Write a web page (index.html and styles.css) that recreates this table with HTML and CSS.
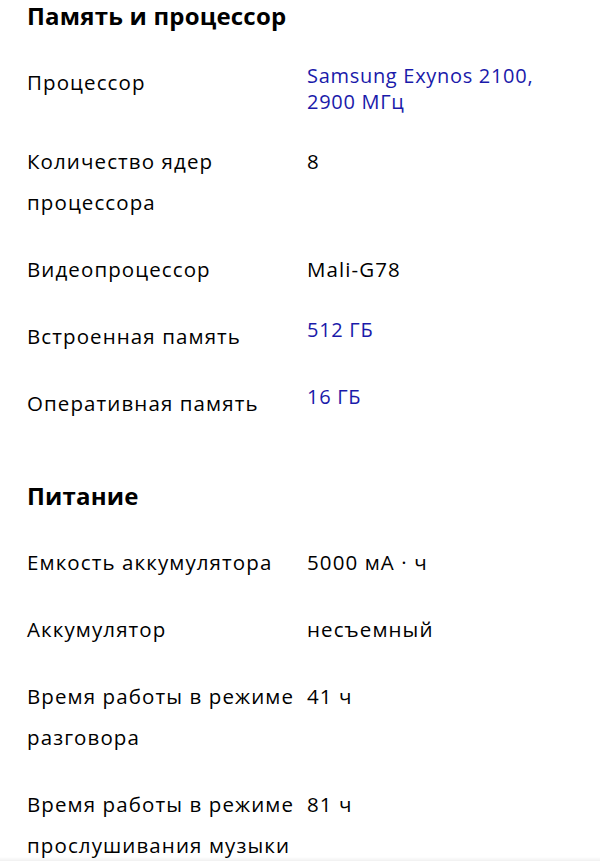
FILE: index.html
```html
<!DOCTYPE html>
<html lang="ru">
<head>
<meta charset="utf-8">
<link rel="stylesheet" href="styles.css">
</head>
<body>
<main class="page">
  <section class="group">
    <h2 class="group-title">Память и процессор</h2>
    <dl class="specs">
      <dt class="spec-name">Процессор</dt>
      <dd class="spec-value"><a class="spec-link" href="#">Samsung Exynos 2100, 2900&nbsp;МГц</a></dd>
      <dt class="spec-name">Количество ядер процессора</dt>
      <dd class="spec-value">8</dd>
      <dt class="spec-name">Видеопроцессор</dt>
      <dd class="spec-value">Mali-G78</dd>
      <dt class="spec-name">Встроенная память</dt>
      <dd class="spec-value"><a class="spec-link" href="#">512 ГБ</a></dd>
      <dt class="spec-name">Оперативная память</dt>
      <dd class="spec-value"><a class="spec-link" href="#">16 ГБ</a></dd>
    </dl>
  </section>
  <section class="group">
    <h2 class="group-title">Питание</h2>
    <dl class="specs">
      <dt class="spec-name">Емкость аккумулятора</dt>
      <dd class="spec-value">5000 мА · ч</dd>
      <dt class="spec-name">Аккумулятор</dt>
      <dd class="spec-value">несъемный</dd>
      <dt class="spec-name">Время работы в режиме разговора</dt>
      <dd class="spec-value">41 ч</dd>
      <dt class="spec-name">Время работы в режиме прослушивания музыки</dt>
      <dd class="spec-value">81 ч</dd>
    </dl>
  </section>
</main>
<div class="bottom-fade"></div>
</body>
</html>
```
FILE: styles.css
```css
html, body {
  margin: 0;
  padding: 0;
  background: #fff;
}
body {
  font-family: "Open Sans", "Noto Sans", sans-serif;
  color: #000;
}
.page {
  padding: 1px 20px 0 27px;
}
.group + .group {
  margin-top: 57px;
}
.group-title {
  margin: 0 0 31px;
  font-size: 24px;
  line-height: 30px;
  font-weight: 700;
  letter-spacing: 0.2px;
}
.specs {
  margin: 0;
  display: grid;
  grid-template-columns: 270px 1fr;
  column-gap: 10px;
  row-gap: 26px;
}
.spec-name,
.spec-value {
  margin: 0;
  font-size: 20.5px;
  line-height: 41px;
  letter-spacing: 1.1px;
}
.spec-link {
  display: block;
  padding-top: 1px;
  color: #1a1aaa;
  text-decoration: none;
  font-size: 20px;
  line-height: 26px;
  letter-spacing: 0.7px;
  max-width: 250px;
}
.bottom-fade {
  position: fixed;
  left: 0;
  right: 0;
  bottom: 0;
  height: 4px;
  background: linear-gradient(to bottom, rgba(0,0,0,0), rgba(0,0,0,0.06));
}
```
